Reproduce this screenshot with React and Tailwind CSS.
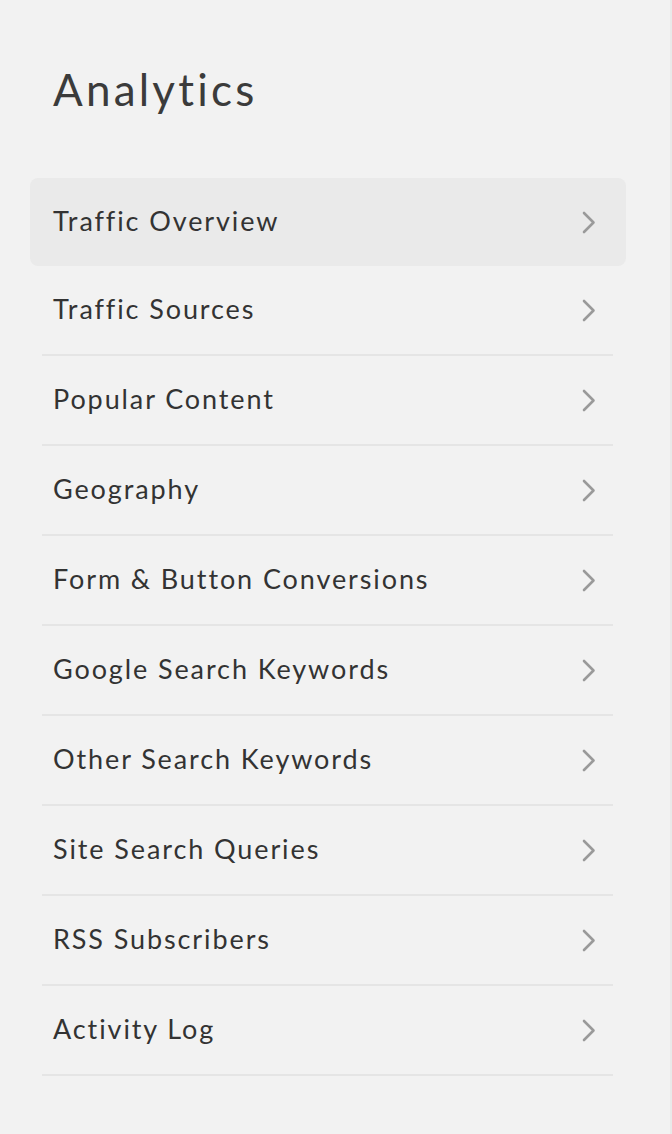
const items = [
  'Traffic Overview',
  'Traffic Sources',
  'Popular Content',
  'Geography',
  'Form & Button Conversions',
  'Google Search Keywords',
  'Other Search Keywords',
  'Site Search Queries',
  'RSS Subscribers',
  'Activity Log',
];

function Chevron() {
  return (
    <svg width="14" height="23" viewBox="0 0 14 23" fill="none" className="shrink-0">
      <path d="M2 2l9.5 9.5L2 21" stroke="#9a9a9a" strokeWidth="2.6" strokeLinecap="round" strokeLinejoin="round" />
    </svg>
  );
}

export default function App() {
  return (
    <div
      className="min-h-[1134px] w-[672px] bg-[#f2f2f2] border-r-2 border-[#e9e9e9] text-[#333333]"
      style={{ fontFamily: 'Lato, "Open Sans", sans-serif' }}
    >
      <div className="pt-[63px] pl-[53px]">
        <h1 className="text-[44px] leading-[52px] font-normal tracking-[3.2px] text-[#3b3b3b]">Analytics</h1>
      </div>

      <nav className="mt-[63px] mr-[57px] ml-[42px]">
        {items.map((label, i) => (
          <div
            key={label}
            className={
              i === 0
                ? 'flex items-center justify-between h-[88px] -ml-[12px] -mr-[13px] pl-[23px] pr-[30px] rounded-lg bg-[#eaeaea]'
                : 'flex items-center justify-between h-[90px] pl-[11px] pr-[17px] border-b-2 border-[#e5e5e5]'
            }
          >
            <span className="text-[27px] tracking-[1.9px] -mt-[2px]">{label}</span>
            <Chevron />
          </div>
        ))}
      </nav>
    </div>
  );
}
